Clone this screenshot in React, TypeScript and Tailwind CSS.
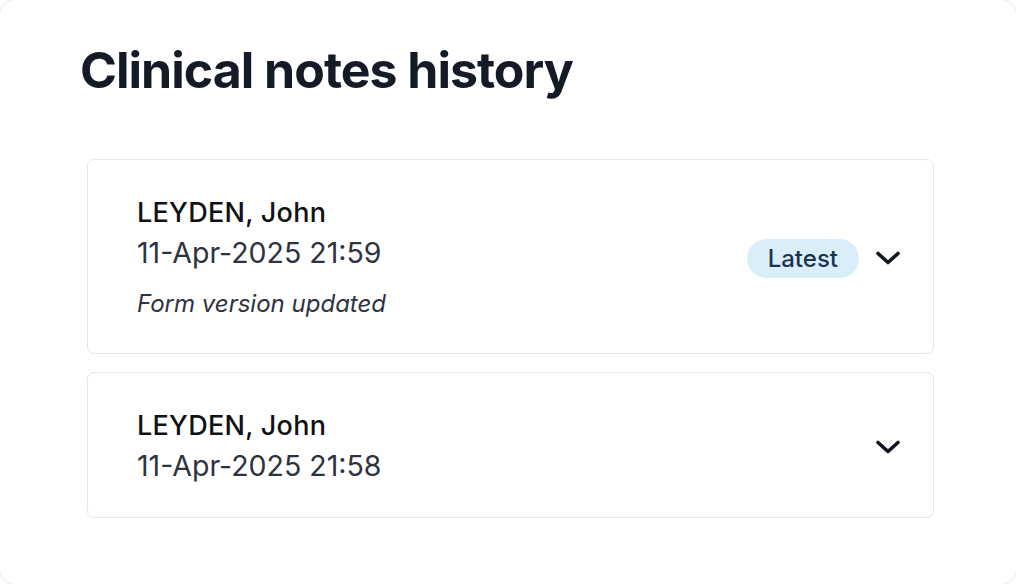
type Note = {
  id: string;
  author: string;
  timestamp: string;
  comment?: string;
  latest?: boolean;
};

const notes: Note[] = [
  {
    id: "n2",
    author: "LEYDEN, John",
    timestamp: "11-Apr-2025 21:59",
    comment: "Form version updated",
    latest: true,
  },
  { id: "n1", author: "LEYDEN, John", timestamp: "11-Apr-2025 21:58" },
];

function Chevron() {
  return (
    <svg width="26" height="16" viewBox="0 0 26 16" fill="none" aria-hidden>
      <path
        d="M3 3.5 13 12.5 23 3.5"
        stroke="#111520"
        strokeWidth="3.6"
        strokeLinecap="round"
        strokeLinejoin="round"
      />
    </svg>
  );
}

function NoteCard({ note }: { note: Note }) {
  return (
    <div
      className={`flex items-center rounded-[7px] border border-[#e3e5e8] bg-white pl-[49px] pr-[32px] pt-[37px] ${
        note.comment ? "pb-[34px]" : "pb-[33px]"
      }`}
    >
      <div className="min-w-0 flex-1">
        <div className="text-[27px] font-medium leading-[32px] tracking-[0.01em] text-[#0f1115]">
          {note.author}
        </div>
        <div className="mt-[6px] text-[28.5px] leading-[36px] text-[#2d3340]">
          {note.timestamp}
        </div>
        {note.comment ? (
          <p className="mt-[18px] text-[24px] italic leading-[30px] text-[#2d3340]">
            {note.comment}
          </p>
        ) : null}
      </div>
      <div className="flex items-center gap-[16px]">
        {note.latest ? (
          <span className="rounded-full bg-[#daeefa] px-[21px] py-[4px] text-[24px] font-medium leading-[31px] text-[#1b3452]">
            Latest
          </span>
        ) : null}
        <Chevron />
      </div>
    </div>
  );
}

export default function App() {
  return (
    <div
      className="h-[584px] w-[1016px] overflow-hidden bg-white"
      style={{ fontFamily: "Inter, 'Noto Sans', sans-serif" }}
    >
      <div className="h-full rounded-[16px] bg-white px-[80px] pt-[42px] shadow-[0_0_3px_rgba(0,0,0,0.18)]">
        <h1 className="text-[50px] font-bold leading-[56px] tracking-[-0.02em] text-[#141a26]">
          Clinical notes history
        </h1>
        <div className="mt-[61px] flex flex-col gap-[18px] pl-[7px] pr-[2px]">
          {notes.map((note) => (
            <NoteCard key={note.id} note={note} />
          ))}
        </div>
      </div>
    </div>
  );
}
